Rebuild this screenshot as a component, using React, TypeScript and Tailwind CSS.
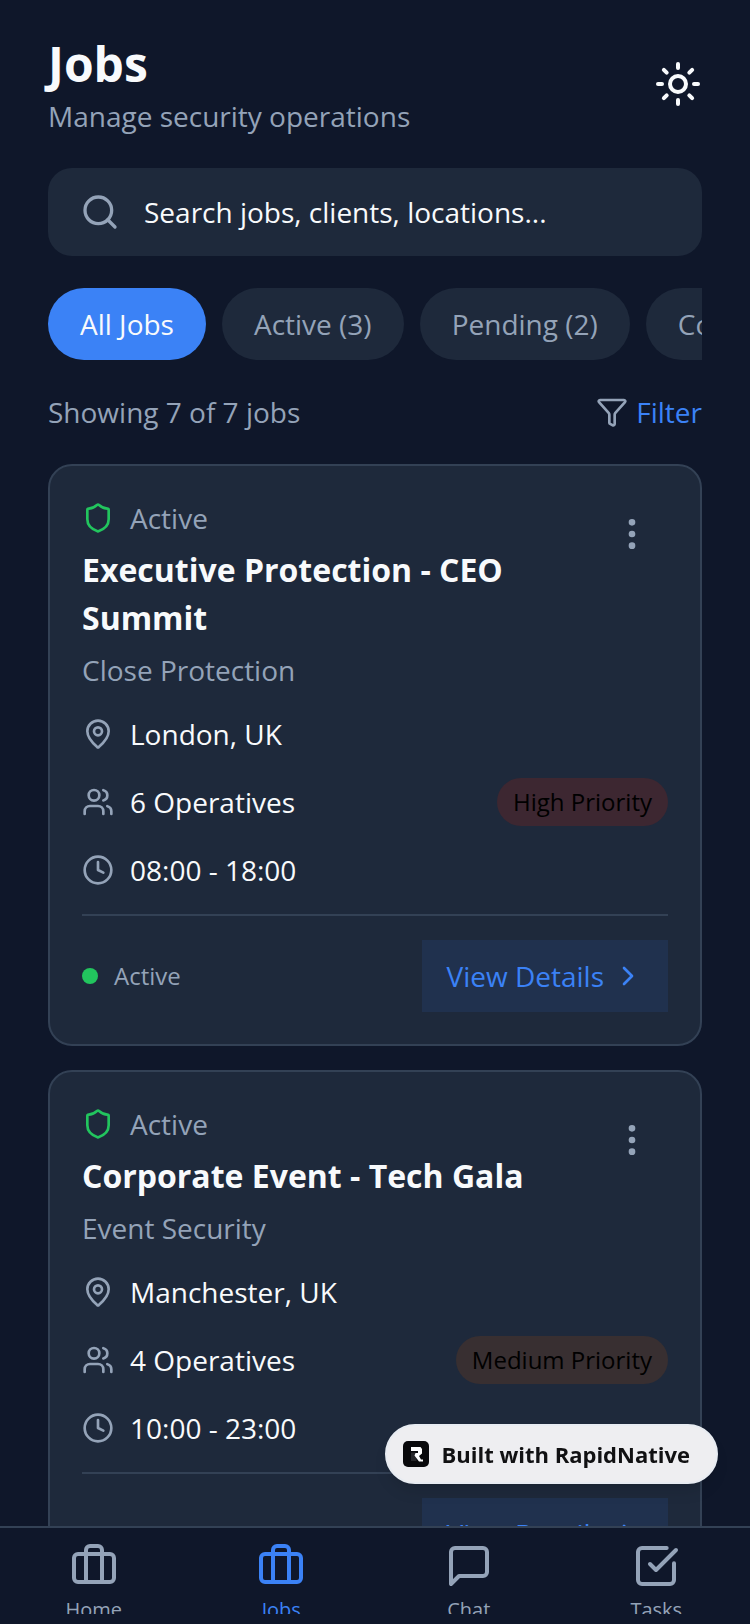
import {
  Briefcase,
  ChevronRight,
  Clock,
  EllipsisVertical,
  Funnel,
  MapPin,
  Search,
  Shield,
  SquareCheckBig,
  Sun,
  Users,
} from "lucide-react";

const filters = [
  "All Jobs",
  "Active (3)",
  "Pending (2)",
  "Completed (2)",
];

const jobs = [
  {
    title: "Executive Protection - CEO Summit",
    type: "Close Protection",
    location: "London, UK",
    operatives: 6,
    time: "08:00 - 18:00",
    priority: "High Priority",
    badge: "bg-[#3d2731]",
  },
  {
    title: "Corporate Event - Tech Gala",
    type: "Event Security",
    location: "Manchester, UK",
    operatives: 4,
    time: "10:00 - 23:00",
    priority: "Medium Priority",
    badge: "bg-[#382f31]",
  },
];

type Job = (typeof jobs)[number];

function MessageIcon({ className }: { className?: string }) {
  return (
    <svg
      viewBox="0 0 24 24"
      fill="none"
      stroke="currentColor"
      strokeWidth="2"
      strokeLinecap="round"
      strokeLinejoin="round"
      className={className}
      aria-hidden="true"
    >
      <path d="M21 15a2 2 0 0 1-2 2H7l-4 4V5a2 2 0 0 1 2-2h14a2 2 0 0 1 2 2z" />
    </svg>
  );
}

const tabs = [
  { label: "Home", icon: Briefcase, active: false },
  { label: "Jobs", icon: Briefcase, active: true },
  { label: "Chat", icon: MessageIcon, active: false },
  { label: "Tasks", icon: SquareCheckBig, active: false },
];

function JobCard({ job }: { job: Job }) {
  return (
    <article className="rounded-3xl border-2 border-[#334155] bg-[#1e293b] p-8">
      <div className="flex items-start">
        <div className="flex-1">
          <div className="flex items-center gap-4 text-[#94a3b8]">
            <Shield className="size-8 text-[#22c55e]" />
            <span>Active</span>
          </div>
          <h2 className="mt-2 text-[32px] leading-12 font-bold">{job.title}</h2>
          <p className="mt-2 text-[#94a3b8]">{job.type}</p>
        </div>
        <button aria-label="Job options" className="p-4 text-[#94a3b8]">
          <EllipsisVertical className="size-10" />
        </button>
      </div>

      <div className="mt-6 flex flex-col gap-6">
        <div className="flex items-center gap-4">
          <MapPin className="size-8 text-[#94a3b8]" />
          <span>{job.location}</span>
        </div>
        <div className="flex items-center justify-between">
          <div className="flex items-center gap-4">
            <Users className="size-8 text-[#94a3b8]" />
            <span>{job.operatives} Operatives</span>
          </div>
          <span
            className={`rounded-full px-4 py-2 text-2xl leading-8 text-black ${job.badge}`}
          >
            {job.priority}
          </span>
        </div>
        <div className="flex items-center gap-4">
          <Clock className="size-8 text-[#94a3b8]" />
          <span>{job.time}</span>
        </div>
      </div>

      <div className="mt-6 flex items-center justify-between border-t-2 border-[#334155] pt-6">
        <div className="flex items-center gap-4 text-2xl text-[#94a3b8]">
          <span className="size-4 rounded-full bg-[#22c55e]" />
          <span>Active</span>
        </div>
        <button className="flex items-center gap-2 bg-[#3b82f6]/10 px-6 py-4 text-[#3b82f6]">
          View Details
          <ChevronRight className="size-8" />
        </button>
      </div>
    </article>
  );
}

export default function App() {
  return (
    <div className="flex h-screen flex-col bg-[#0f172a] font-['Open_Sans',sans-serif] text-[28px] leading-10 text-[#f8fafc]">
      <main className="min-h-0 flex-1 overflow-hidden px-12 pt-8">
        <header className="flex items-center justify-between">
          <div>
            <h1 className="text-5xl leading-16 font-bold">Jobs</h1>
            <p className="text-[#94a3b8]">Manage security operations</p>
          </div>
          <button aria-label="Toggle theme">
            <Sun className="size-12" />
          </button>
        </header>

        <label className="mt-8 flex items-center gap-6 rounded-3xl bg-[#1e293b] px-8 py-6">
          <Search className="size-10 text-[#94a3b8]" />
          <input
            type="text"
            aria-label="Search jobs"
            placeholder="Search jobs, clients, locations..."
            className="h-10 min-w-0 flex-1 bg-transparent outline-none placeholder:text-[#f8fafc]"
          />
        </label>

        <div className="mt-8 flex gap-4 overflow-hidden">
          {filters.map((filter, i) => (
            <button
              key={filter}
              className={`shrink-0 rounded-full px-8 py-4 whitespace-nowrap ${
                i === 0
                  ? "bg-[#3b82f6] text-[#f8fafc]"
                  : "bg-[#1e293b] text-[#94a3b8]"
              }`}
            >
              {filter}
            </button>
          ))}
        </div>

        <div className="mt-8 flex items-center justify-between text-[#94a3b8]">
          <p>Showing 7 of 7 jobs</p>
          <button className="flex items-center gap-2">
            <Funnel className="size-8" />
            <span className="text-[#3b82f6]">Filter</span>
          </button>
        </div>

        <section className="mt-8 flex flex-col gap-6">
          {jobs.map((job) => (
            <JobCard key={job.title} job={job} />
          ))}
        </section>
      </main>

      <nav className="border-t-2 border-[#334155] pb-[10px]">
        <div className="flex h-[86px] overflow-hidden pt-[14px]">
          {tabs.map(({ label, icon: Icon, active }) => (
            <a
              key={label}
              href="#"
              className={`flex flex-1 flex-col items-center gap-1 text-xl leading-8 ${
                active ? "text-[#3b82f6]" : "text-[#94a3b8]"
              }`}
            >
              <Icon className="size-12 shrink-0" />
              <span>{label}</span>
            </a>
          ))}
        </div>
      </nav>

      {/* floating badge */}
      <a
        href="#"
        className="fixed right-8 bottom-[140px] flex h-[60px] items-center gap-3 rounded-full border-2 border-[#e8ecf2] bg-[#eeeef1] pr-[26px] pl-4 text-[22px] font-bold text-[#111113] shadow-lg"
      >
        <svg viewBox="0 0 26 26" className="size-[26px]" aria-hidden="true">
          <rect width="26" height="26" rx="5" fill="#09090b" />
          <path d="M8 11.5h4.500l1 2.500v6H8z" fill="#27272a" />
          <path
            d="M8 6h9.500L19 8v4.500l-3 2.500 2 3.500h2v2h-4l-4.500-6 1-2.500h2.500V10H8z"
            fill="#fff"
          />
        </svg>
        Built with RapidNative
      </a>
    </div>
  );
}
